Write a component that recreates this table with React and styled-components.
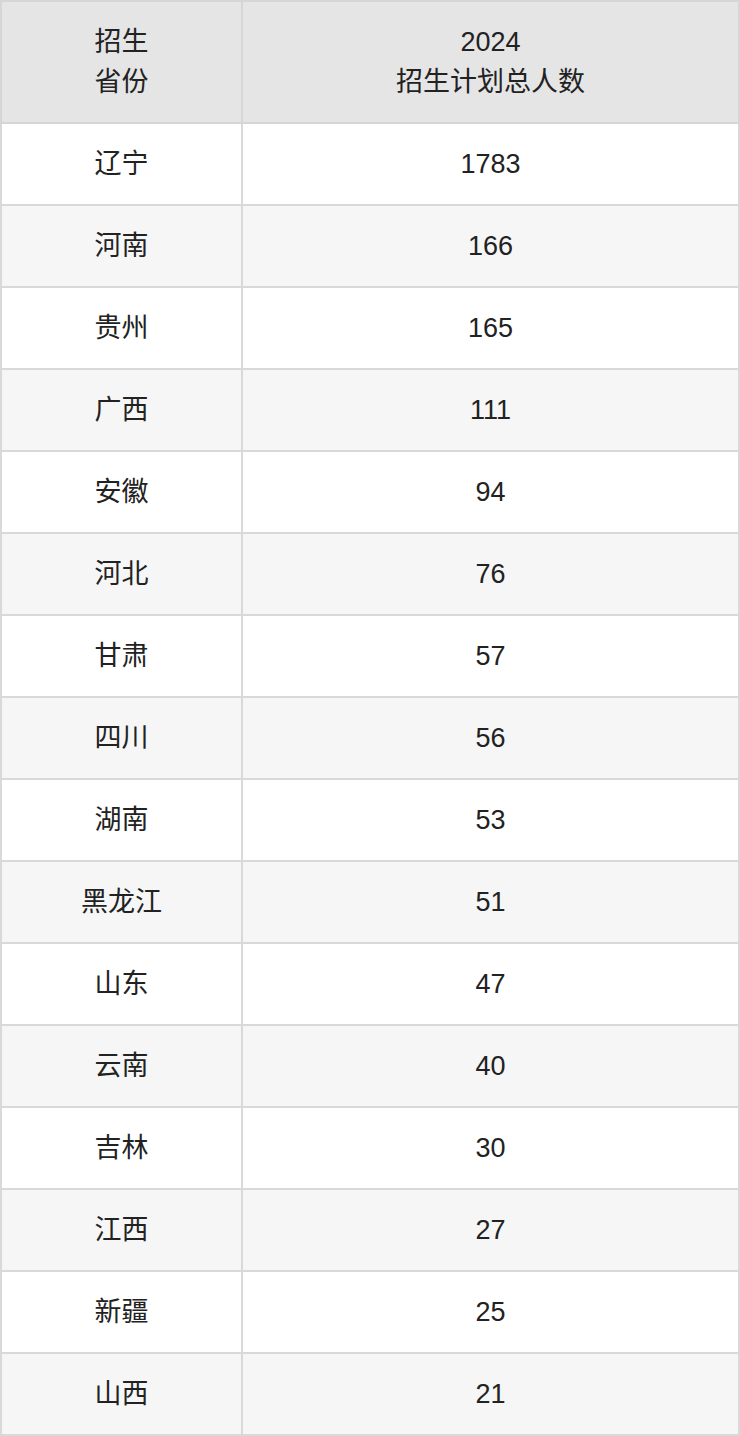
import styled, { createGlobalStyle } from 'styled-components';

const GlobalStyle = createGlobalStyle`
  html, body {
    margin: 0;
    padding: 0;
    background: #fff;
  }
`;

const Table = styled.table`
  width: 740px;
  border-collapse: collapse;
  table-layout: fixed;
  font-family: "Liberation Sans", "Noto Sans CJK SC", sans-serif;
  font-size: 27px;
  line-height: 40px;
  color: #222;
`;

const HeadCell = styled.th`
  background: #e5e5e5;
  border: 2px solid #d6d6d6;
  padding: 20px 8px;
  font-weight: normal;
  text-align: center;
  width: ${(p) => p.width || 'auto'};
`;

const Row = styled.tr`
  background: ${(p) => (p.striped ? '#f6f6f6' : '#fff')};
`;

const Cell = styled.td`
  border: 2px solid #d9d9d9;
  padding: 20px 8px;
  text-align: center;
`;

const rows = [
  ['辽宁', '1783'],
  ['河南', '166'],
  ['贵州', '165'],
  ['广西', '111'],
  ['安徽', '94'],
  ['河北', '76'],
  ['甘肃', '57'],
  ['四川', '56'],
  ['湖南', '53'],
  ['黑龙江', '51'],
  ['山东', '47'],
  ['云南', '40'],
  ['吉林', '30'],
  ['江西', '27'],
  ['新疆', '25'],
  ['山西', '21'],
];

const App = () => {
  return (
    <>
      <GlobalStyle />
      <Table>
        <thead>
          <tr>
            <HeadCell width="223px">
              招生
              <br />
              省份
            </HeadCell>
            <HeadCell>
              2024
              <br />
              招生计划总人数
            </HeadCell>
          </tr>
        </thead>
        <tbody>
          {rows.map(([province, count], index) => (
            <Row key={province} striped={index % 2 === 1}>
              <Cell>{province}</Cell>
              <Cell>{count}</Cell>
            </Row>
          ))}
        </tbody>
      </Table>
    </>
  );
};

export default App;
